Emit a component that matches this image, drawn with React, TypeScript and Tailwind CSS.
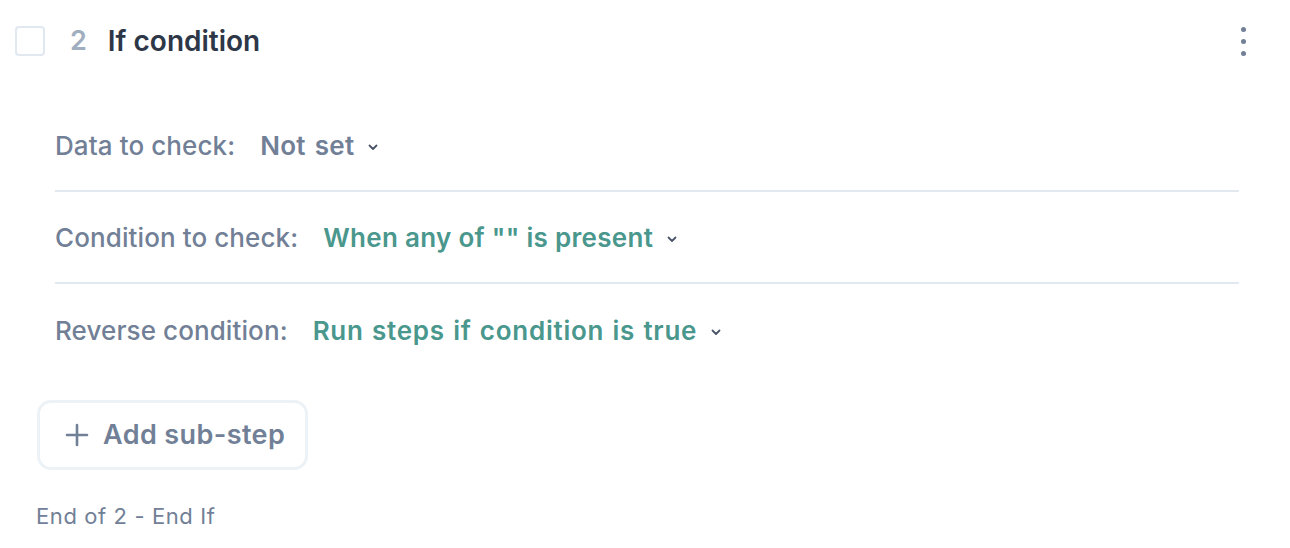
import React from "react";

function Chevron() {
  return (
    <svg width="12" height="12" viewBox="0 0 12 12" fill="none" className="shrink-0">
      <path d="M2.5 4.5 L6 8 L9.5 4.5" stroke="#4a5568" strokeWidth="1.8" strokeLinecap="round" strokeLinejoin="round" />
    </svg>
  );
}

function Row({ label, value, teal, last, valueClass }: { label: string; value: string; teal?: boolean; last?: boolean; valueClass: string }) {
  return (
    <div className={`flex items-center h-[92px] ${last ? "" : "border-b-2 border-[#e2e8f0]"}`}>
      <span className="text-[#718096] font-medium tracking-[0.1px]">{label}</span>
      <span className={`ml-[25px] ${teal ? "text-[#4a978d]" : "text-[#718096]"} font-semibold ${valueClass}`}>{value}</span>
      <span className="ml-[13px] mt-[3px]">
        <Chevron />
      </span>
    </div>
  );
}

export default function App() {
  return (
    <div className="w-[1290px] h-[548px] bg-white overflow-hidden" style={{ fontFamily: "Inter, 'Noto Sans', sans-serif" }}>
      <div className="flex items-center h-[82px] pl-[15px] pr-[44px]">
        <div className="w-[30px] h-[30px] rounded-[4px] border-2 border-[#e2e8f0]"></div>
        <span className="ml-[25px] text-[27px] font-semibold text-[#a0aec0]">2</span>
        <span className="ml-[21px] text-[28px] font-semibold text-[#2d3748]">If condition</span>
        <div className="ml-auto flex flex-col gap-[7px] items-center">
          <span className="w-[5px] h-[5px] rounded-full bg-[#718096]"></span>
          <span className="w-[5px] h-[5px] rounded-full bg-[#718096]"></span>
          <span className="w-[5px] h-[5px] rounded-full bg-[#718096]"></span>
        </div>
      </div>
      <div className="ml-[55px] mr-[51px] mt-[18px] text-[26px]">
        <Row label="Data to check:" value="Not set" valueClass="tracking-[0.3px] [word-spacing:2px]" />
        <Row label="Condition to check:" value={'When any of "" is present'} teal valueClass="tracking-[0.3px]" />
        <Row label="Reverse condition:" value="Run steps if condition is true" teal last valueClass="tracking-[0.75px] [word-spacing:1px]" />
      </div>
      <div className="ml-[37px] mt-[24px] w-[271px] h-[70px] rounded-[14px] border-[3px] border-[#edf2f7] flex items-center pl-[25px]">
        <svg width="24" height="24" viewBox="0 0 24 24" fill="none">
          <path d="M12 2 V22 M2 12 H22" stroke="#718096" strokeWidth="2.6" strokeLinecap="round" />
        </svg>
        <span className="ml-[14px] text-[27px] font-semibold text-[#718096] tracking-[0.4px]">Add sub-step</span>
      </div>
      <div className="ml-[36px] mt-[30px] text-[22px] text-[#718096] tracking-[0.6px]">End of 2 - End If</div>
    </div>
  );
}
